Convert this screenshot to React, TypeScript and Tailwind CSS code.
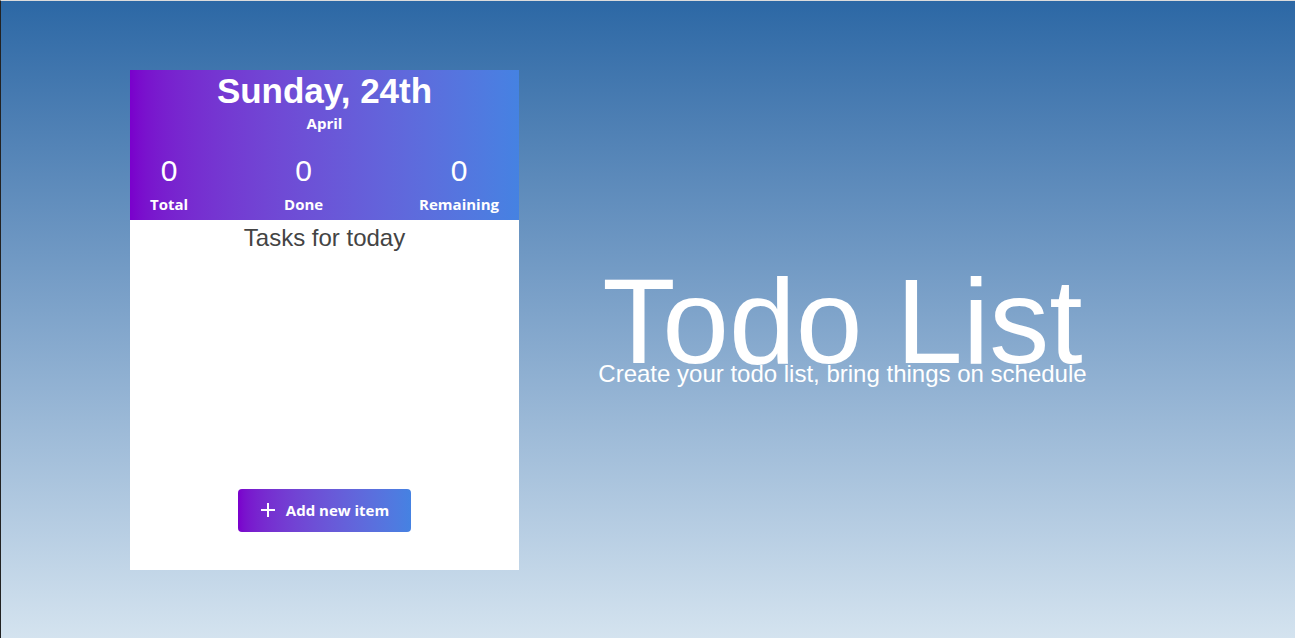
import React from "react";

export default function App() {
  return (
    <div className="w-full h-[638px] border-t border-t-[#dcdcdc] border-l border-l-[#222222] bg-gradient-to-b from-[#2c68a5] to-[#d4e3ef] flex items-center px-[129px] overflow-hidden" style={{ fontFamily: '"Liberation Sans", Arial, sans-serif' }}>
      <div className="w-[389px] h-[500px] bg-white flex flex-col shrink-0">
        <div className="h-[150px] bg-gradient-to-r from-[#7a00cc] to-[#4582e2] text-white flex flex-col items-center">
          <div className="text-[35px] font-bold leading-[40px] mt-[1px]">Sunday, 24th</div>
          <div className="text-[15px] font-bold leading-[18px] mt-[3px]" style={{ fontFamily: '"Open Sans", sans-serif' }}>April</div>
          <div className="w-full px-5 flex justify-between mt-[22px]">
            {[
              ["0", "Total"],
              ["0", "Done"],
              ["0", "Remaining"],
            ].map(([n, l]) => (
              <div key={l} className="flex flex-col items-center">
                <div className="text-[30px] leading-[34px]">{n}</div>
                <div className="text-[15px] font-bold leading-[20px] mt-[6px]" style={{ fontFamily: '"Open Sans", sans-serif' }}>{l}</div>
              </div>
            ))}
          </div>
        </div>
        <div className="text-center text-[24px] leading-[36px] text-[#444444]">Tasks for today</div>
        <div className="flex-1" />
        <div className="flex justify-center mb-[38px]">
          <button className="w-[173px] h-[43px] rounded-[4px] bg-gradient-to-r from-[#7a00cc] to-[#4582e2] text-white flex items-center justify-center gap-[10px] text-[15px] font-bold" style={{ fontFamily: '"Open Sans", sans-serif' }}>
            <svg width="16" height="16" viewBox="0 0 16 16" fill="none" stroke="white" strokeWidth="2">
              <path d="M8 1v14M1 8h14" />
            </svg>
            Add new item
          </button>
        </div>
      </div>
      <div className="flex-1 self-start mt-[277px] flex flex-col items-center text-white">
        <div className="text-[120px] leading-[86px]">Todo List</div>
        <div className="text-[24px] leading-[18px] mt-[1px]">Create your todo list, bring things on schedule</div>
      </div>
    </div>
  );
}
